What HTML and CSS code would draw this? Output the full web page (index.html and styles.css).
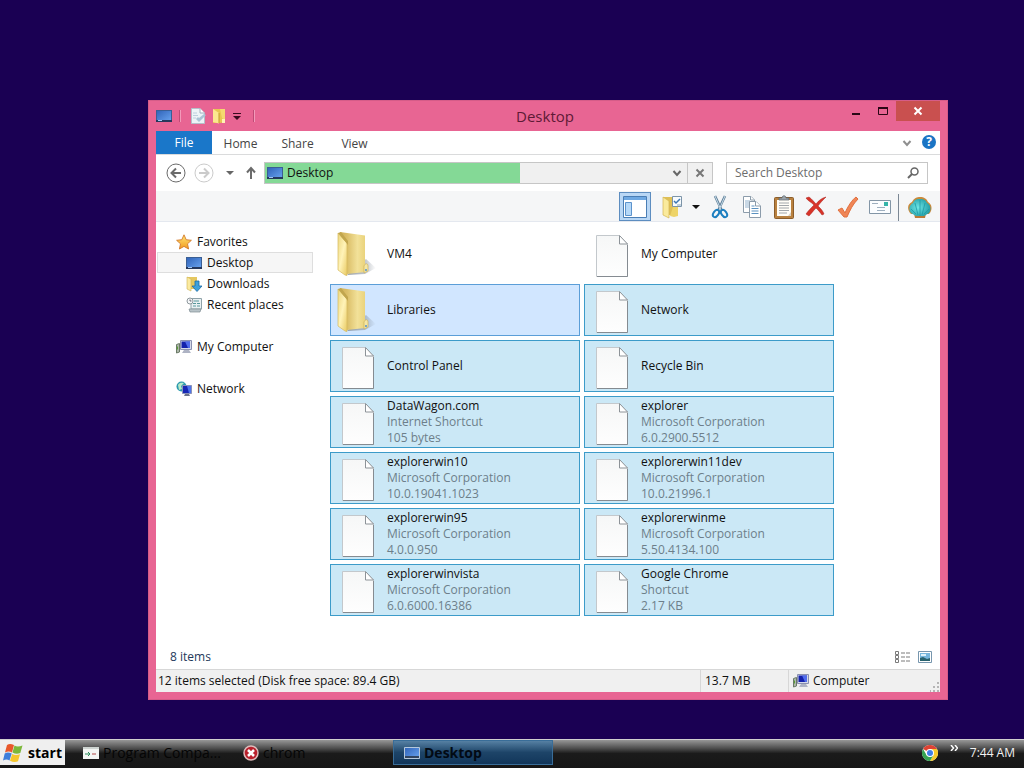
FILE: index.html
```
<!DOCTYPE html>
<html lang="en">
<head>
    <meta charset="UTF-8">
    <meta name="viewport" content="width=device-width, initial-scale=1.0">
    <title>Desktop</title>
    <link rel="stylesheet" href="styles.css">
</head>
<body>
    <!-- shared icons -->
    <svg class="sprite" aria-hidden="true">
        <defs>
            <linearGradient id="g-screen" x1="0" y1="0" x2="1" y2="1">
                <stop offset="0" stop-color="#2f62b8"/>
                <stop offset="1" stop-color="#6aa5f0"/>
            </linearGradient>
            <linearGradient id="g-paper" x1="0" y1="0" x2="0" y2="1">
                <stop offset="0" stop-color="#f6f7f7"/>
                <stop offset="1" stop-color="#fefefe"/>
            </linearGradient>
            <linearGradient id="g-front" x1="0" y1="0" x2="1" y2="1">
                <stop offset="0" stop-color="#ecd67e"/>
                <stop offset="0.5" stop-color="#fff3b8"/>
                <stop offset="1" stop-color="#e9ca62"/>
            </linearGradient>
            <linearGradient id="g-back" x1="0" y1="0" x2="1" y2="0">
                <stop offset="0" stop-color="#cfae55"/>
                <stop offset="0.3" stop-color="#dcc06a"/>
                <stop offset="0.7" stop-color="#f2e199"/>
                <stop offset="1" stop-color="#ead37c"/>
            </linearGradient>
            <linearGradient id="g-shadow" x1="0" y1="0" x2="1" y2="0">
                <stop offset="0" stop-color="#7f8893" stop-opacity="0.8"/>
                <stop offset="0.6" stop-color="#7f8893" stop-opacity="0.5"/>
                <stop offset="1" stop-color="#7f8893" stop-opacity="0"/>
            </linearGradient>
            <linearGradient id="g-star" x1="0" y1="0" x2="0" y2="1">
                <stop offset="0" stop-color="#ffe878"/>
                <stop offset="1" stop-color="#f29a1d"/>
            </linearGradient>
            <radialGradient id="g-shell" cx="0.4" cy="0.5" r="0.7">
                <stop offset="0" stop-color="#6fe6e6"/>
                <stop offset="1" stop-color="#16929c"/>
            </radialGradient>
        </defs>
        <symbol id="i-desktop" viewBox="0 0 16 16">
            <rect x="0.5" y="2.5" width="15" height="11" fill="url(#g-screen)" stroke="#3a5f94"/>
            <path d="M0 12h16v2H0z" fill="#26385c"/>
            <path d="M2 12.5h4" stroke="#9cc6f4"/>
        </symbol>
        <symbol id="i-file" viewBox="0 0 34 44">
            <path d="M2.500 42.500V1.500H24l7.500 8V42.500z" transform="translate(.5 .5)" fill="#50606c" opacity=".45"/>
            <path d="M1.500 42.500V1.500H24L32.500 10V42.500z" fill="url(#g-paper)" stroke="#c3c8cc"/>
            <path d="M24.500 1.500V10H32.500z" fill="#fff" stroke="#8d9398"/>
            <path d="M32.500 11V42.500H2" fill="none" stroke="#858b91"/>
        </symbol>
        <symbol id="i-folder" viewBox="0 0 40 46">
            <path d="M30 28L40 37 29 43 11 44z" fill="url(#g-shadow)"/>
            <path d="M4 1L29 4.500V41L11 43z" fill="url(#g-back)"/>
            <path d="M28 35c1-3 4-3 4 0v5l-4 2z" fill="#f5e6a4" stroke="#cdb25a" stroke-width=".7"/>
            <path d="M29 38h2v2h-2z" fill="#7aa6c0"/>
            <path d="M2 2L11 12V44.500L9 44 2 39z" fill="url(#g-front)" stroke="#d6b95c" stroke-width=".7"/>
            <path d="M2 2L5 1l7 9v4z" fill="#c1a64e"/>
        </symbol>
        <symbol id="i-computer" viewBox="0 0 16 16">
            <path d="M0.500 5.500l3-1V13l-3 1z" fill="#aeb8ab" stroke="#6a7a66"/>
            <path d="M1.500 7.500v3" stroke="#5ba036"/>
            <path d="M4.500 1.500H15.500V10.500H4.500z" fill="#d5d9e8" stroke="#8a90b0"/>
            <path d="M5.500 2.500H14V9H5.500z" fill="#1522ac"/>
            <path d="M9 2.500h5V9h-2z" fill="#506cec"/>
            <path d="M8 11h5l2 3H6z" fill="#aeb3c4"/>
        </symbol>
        <symbol id="i-caret" viewBox="0 0 8 4"><path d="M0 0h8L4 4z" fill="currentColor"/></symbol>
        <symbol id="i-chevron" viewBox="0 0 10 8"><path d="M1.500 2L5 6l3.500-4" fill="none" stroke="currentColor" stroke-width="2"/></symbol>
    </svg>

    <main class="desktop">
        <section class="window">
            <header class="titlebar">
                <div class="quick-access">
                    <svg class="icon"><use href="#i-desktop"/></svg>
                    <span class="divider"></span>
                    <button type="button" aria-label="Properties">
                        <svg class="icon" viewBox="0 0 16 16"><path d="M1.500.500H10L14.500 5V15.500H1.500z" fill="#edf3f7" stroke="#b5c0ca"/><path d="M10 .5V5h4.500" fill="#fff" stroke="#9eb0bf"/><path d="M3 5h4M3 7.500h5M3 10h3" stroke="#bdcfdd"/><path d="M6 11l3 3 7-7-2-1-5 4-1-1z" fill="#aac4d6"/></svg>
                    </button>
                    <button type="button" aria-label="New folder">
                        <svg class="icon" viewBox="0 0 16 16"><path d="M2 1h12v13l-5 1H2z" fill="#e9c653"/><path d="M2 1l6 4v10.500L2 14z" fill="#fce88f"/><path d="M9 1l2 9 3 2V1z" fill="#f5d970"/><path d="M8 5v10" stroke="#c29b2f"/><path d="M11 11h3v4h-3z" fill="#fff3b5"/></svg>
                    </button>
                    <button type="button" aria-label="Customize toolbar">
                        <svg class="icon" viewBox="0 0 16 16"><path d="M1 5.500h8" stroke="#3a0a1e"/><path d="M1 8h8L5 12z" fill="#3a0a1e"/></svg>
                    </button>
                    <span class="divider"></span>
                </div>
                <h1>Desktop</h1>
                <div class="caption-buttons">
                    <button type="button" aria-label="Minimize"><svg width="12" height="10" viewBox="0 0 12 10"><path d="M2 8h8" stroke="#2a0716" stroke-width="2"/></svg></button>
                    <button type="button" aria-label="Maximize"><svg width="12" height="10" viewBox="0 0 12 10"><path d="M1.500 1.500h9v7h-9z" fill="none" stroke="#2a0716"/><path d="M1 2h10" stroke="#2a0716" stroke-width="2"/></svg></button>
                    <button type="button" class="close" aria-label="Close"><svg width="10" height="10" viewBox="0 0 10 10"><path d="M1.500 1.500l7 7M8.500 1.500l-7 7" stroke="#fff" stroke-width="2"/></svg></button>
                </div>
            </header>

            <div class="client">
                <nav class="ribbon">
                    <button type="button" class="tab file">File</button>
                    <button type="button" class="tab">Home</button>
                    <button type="button" class="tab">Share</button>
                    <button type="button" class="tab">View</button>
                    <span class="spacer"></span>
                    <button type="button" class="expand" aria-label="Expand ribbon"><svg width="10" height="8"><use href="#i-chevron"/></svg></button>
                    <button type="button" class="help" aria-label="Help">?</button>
                </nav>

                <div class="navbar">
                    <button type="button" aria-label="Back"><svg width="20" height="20" viewBox="0 0 20 20" fill="none" stroke="#6b6b6b"><circle cx="10" cy="10" r="9"/><path d="M15 10H6M10 5.500L5.500 10l4.500 4.500" stroke-width="2"/></svg></button>
                    <button type="button" aria-label="Forward" disabled><svg width="20" height="20" viewBox="0 0 20 20" fill="none" stroke="#cbcbcb"><circle cx="10" cy="10" r="9"/><path d="M5 10h9M10 5.500l4.500 4.500-4.500 4.500" stroke-width="2"/></svg></button>
                    <button type="button" class="recent" aria-label="Recent locations"><svg width="8" height="4"><use href="#i-caret"/></svg></button>
                    <button type="button" class="up" aria-label="Up"><svg width="12" height="14" viewBox="0 0 12 14" fill="none" stroke="#6b6b6b" stroke-width="2"><path d="M6 13V2M2 6.500L6 2l4 4.500"/></svg></button>
                    <div class="address">
                        <svg class="icon"><use href="#i-desktop"/></svg>
                        <input type="text" value="Desktop" aria-label="Address">
                        <button type="button" aria-label="Previous locations"><svg width="10" height="8"><use href="#i-chevron"/></svg></button>
                        <button type="button" class="stop" aria-label="Stop"><svg width="10" height="10" viewBox="0 0 10 10"><path d="M1.500 1.500l7 7M8.500 1.500l-7 7" stroke="#777" stroke-width="2"/></svg></button>
                    </div>
                    <div class="search">
                        <input type="text" placeholder="Search Desktop" aria-label="Search Desktop">
                        <svg width="12" height="12" viewBox="0 0 12 12" fill="none" stroke="#666"><circle cx="7.500" cy="4.500" r="3.500" stroke-width="1.500"/><path d="M5 7L1 11" stroke-width="2"/></svg>
                    </div>
                </div>

                <div class="toolbar">
                    <button type="button" class="active" aria-label="Navigation pane">
                        <svg width="26" height="24" viewBox="0 0 26 24"><path d="M1.500 1.500h23v21h-23z" fill="#fff" stroke="#4a7eb5"/><path d="M2 2h22v3H2z" fill="#6ea8e2"/><path d="M3.500 7.500h6v13h-6z" fill="#b5d8f8" stroke="#5c93cc"/></svg>
                    </button>
                    <button type="button" aria-label="Folder options">
                        <svg width="24" height="24" viewBox="0 0 24 24"><path d="M3 2h12v18H8z" fill="#dfc057"/><path d="M3 2l6 4v17l-6-3z" fill="#faea9c" stroke="#d4b653" stroke-width=".7"/><path d="M13 12h5v9l-4 1-4-1z" fill="#eed468"/><path d="M12.500 1.500h9v10h-9z" fill="#f7fbfe" stroke="#7c94a8"/><path d="M14 6l2 2 4-4" fill="none" stroke="#3d77b4" stroke-width="1.500"/><path d="M17 10h4" stroke="#8ba6bc"/></svg>
                    </button>
                    <button type="button" class="narrow" aria-label="More options"><svg width="8" height="4"><use href="#i-caret"/></svg></button>
                    <button type="button" aria-label="Cut">
                        <svg width="24" height="24" viewBox="0 0 24 24" fill="none"><path d="M7 1l7 15M17 1l-7 15" stroke="#5f7f98" stroke-width="2.500"/><path d="M7 1l6 14M17 1l-6 14" stroke="#c6dbe8"/><ellipse cx="8" cy="18.500" rx="2.500" ry="4" transform="rotate(35 8 18.500)" stroke="#1c7fc0" stroke-width="2"/><ellipse cx="16" cy="18.500" rx="2.500" ry="4" transform="rotate(-35 16 18.500)" stroke="#1c7fc0" stroke-width="2"/></svg>
                    </button>
                    <button type="button" aria-label="Copy">
                        <svg width="24" height="24" viewBox="0 0 24 24" fill="#fff" stroke="#8c9cab"><path d="M3.500 1.500H11L14.500 5V17.500h-11z"/><path d="M10.500 1.500V5h4"/><path d="M5 6h5M5 8h5M5 10h4M5 12h4" stroke="#93b2cd"/><path d="M9.500 6.500H16L20.500 11V22.500h-11z"/><path d="M15.500 6.500V11h5"/><path d="M11.500 11h3M11.500 13.500h7M11.500 16h7M11.500 18.500h7" stroke="#5a91c0"/></svg>
                    </button>
                    <button type="button" aria-label="Paste">
                        <svg width="24" height="24" viewBox="0 0 24 24"><rect x="2.500" y="2.500" width="19" height="21" rx="1" fill="#b9813f" stroke="#8b5d2b"/><path d="M5 5h14v16H5z" fill="#fffdf7"/><path d="M7 8h10M7 10.500h10M7 13h10M7 15.500h10M7 18h8" stroke="#a2a7ab"/><path d="M16 21l3-4v4z" fill="#d9d3c5"/><path d="M7 5V3h3c0-3 4-3 4 0h3v2z" fill="#9aa3aa" stroke="#59636c" stroke-width=".7"/></svg>
                    </button>
                    <button type="button" aria-label="Delete">
                        <svg width="24" height="24" viewBox="0 0 24 24"><path d="M2 3l3-1c3 2 5 5 7 7 3-4 6-6 10-7-3 3-6 6-8 9 3 3 5 5 6 8l-2 1c-2-3-4-5-6-7-3 3-5 6-7 8l-3-2c2-3 5-6 8-9C7 7 4 6 2 3z" fill="#d83328" stroke="#a81e1a" stroke-width=".5"/></svg>
                    </button>
                    <button type="button" aria-label="Properties">
                        <svg width="24" height="24" viewBox="0 0 24 24"><path d="M2 15l4-2 3 5C12 11 16 5 20 2l2 2C17 9 14 15 11 22H8z" fill="#f08556" stroke="#e0703f"/></svg>
                    </button>
                    <button type="button" aria-label="E-mail">
                        <svg width="24" height="24" viewBox="0 0 24 24"><path d="M1.500 5.500h21v13h-21z" fill="#fbfdff" stroke="#8295a6"/><path d="M16 7h4v4h-4z" fill="#36b5aa"/><path d="M4 8.500h6M9 12.500h8M9 15.500h8" stroke="#9eafbf"/></svg>
                    </button>
                    <button type="button" class="shell" aria-label="Classic settings">
                        <svg width="26" height="24" viewBox="0 0 26 24"><path d="M7 18H4C0 14 0 8 5 6c2-4 5-5 8-5 4 0 7 2 8 5 4 2 5 8 1 12h-3l-1 4H8z" fill="#c98a3c"/><path d="M9 20l-5-3C1 13 3 8 6 7c1-4 5-4 7-4 4 0 6 1 7 4 3 1 5 6 2 10l-5 3z" fill="url(#g-shell)"/><path d="M13 20V4M11 19L8 7M15 19l3-12M9 18l-5-5M17 18l5-5" stroke="#1d9aa6" stroke-width=".8"/><path d="M8 20h10v2H8z" fill="#b97a37"/></svg>
                    </button>
                </div>

                <div class="content">
                    <nav class="tree">
                        <a href="#favorites">
                            <svg class="icon" viewBox="0 0 16 16"><path d="M8 .8l2.200 4.900 5.200.6-3.900 3.500 1.100 5.200L8 12.400l-4.600 2.600 1.100-5.200L.6 6.300l5.200-.6z" fill="url(#g-star)" stroke="#d2792b" stroke-width=".9"/></svg>
                            Favorites
                        </a>
                        <a href="#desktop" class="child selected"><svg class="icon"><use href="#i-desktop"/></svg>Desktop</a>
                        <a href="#downloads" class="child">
                            <svg class="icon" viewBox="0 0 16 16"><path d="M1 1h10v12H4z" fill="#e5c760"/><path d="M1 1l4 2v12l-4-2z" fill="#fbeaa0" stroke="#cfb152" stroke-width=".6"/><path d="M9 5h4v5h3l-5 5.500L6 10h3z" fill="#3da0dc" stroke="#1b6aa5" stroke-width=".8"/></svg>
                            Downloads
                        </a>
                        <a href="#recent" class="child">
                            <svg class="icon" viewBox="0 0 16 16"><path d="M5 1.500h10.500V12H5z" fill="#e9f0f2" stroke="#8fa2a9"/><circle cx="4" cy="4" r="3" fill="#f6f8f9" stroke="#8e989d"/><path d="M4 2.500V4h1.500" fill="none" stroke="#667"/><path d="M8 4h5M7 6.500h3M11 6.500h3M7 9h3M11 9h3" stroke="#58989c"/><path d="M3 12h12l-1 3H4z" fill="#b8c3c8" stroke="#7e8c93" stroke-width=".7"/></svg>
                            Recent places
                        </a>
                        <a href="#computer" class="group"><svg class="icon"><use href="#i-computer"/></svg>My Computer</a>
                        <a href="#network" class="group">
                            <svg class="icon" viewBox="0 0 16 16"><circle cx="5.500" cy="5.500" r="5" fill="#2b9aae"/><path d="M2 4c2-3 4-2 6-2L5 5l1 3-3 1z" fill="#b8e9c8"/><path d="M6.500 4.500h9v8h-9z" fill="#1727b5" stroke="#8a92b8"/><path d="M11 5h4v7h-2z" fill="#4e74ec"/><path d="M9 13h4l1 2H8z" fill="#6b728a"/></svg>
                            Network
                        </a>
                    </nav>

                    <ul class="files">
                        <li><a href="#vm4"><svg class="folder"><use href="#i-folder"/></svg><span>VM4</span></a></li>
                        <li><a href="#my-computer"><svg class="file-icon"><use href="#i-file"/></svg><span>My Computer</span></a></li>
                        <li class="selected hot"><a href="#libraries"><svg class="folder"><use href="#i-folder"/></svg><span>Libraries</span></a></li>
                        <li class="selected"><a href="#network-item"><svg class="file-icon"><use href="#i-file"/></svg><span>Network</span></a></li>
                        <li class="selected"><a href="#control-panel"><svg class="file-icon"><use href="#i-file"/></svg><span>Control Panel</span></a></li>
                        <li class="selected"><a href="#recycle-bin"><svg class="file-icon"><use href="#i-file"/></svg><span>Recycle Bin</span></a></li>
                        <li class="selected"><a href="#datawagon"><svg class="file-icon"><use href="#i-file"/></svg><span>DataWagon.com<small>Internet Shortcut</small><small>105 bytes</small></span></a></li>
                        <li class="selected"><a href="#explorer"><svg class="file-icon"><use href="#i-file"/></svg><span>explorer<small>Microsoft Corporation</small><small>6.0.2900.5512</small></span></a></li>
                        <li class="selected"><a href="#explorerwin10"><svg class="file-icon"><use href="#i-file"/></svg><span>explorerwin10<small>Microsoft Corporation</small><small>10.0.19041.1023</small></span></a></li>
                        <li class="selected"><a href="#explorerwin11dev"><svg class="file-icon"><use href="#i-file"/></svg><span>explorerwin11dev<small>Microsoft Corporation</small><small>10.0.21996.1</small></span></a></li>
                        <li class="selected"><a href="#explorerwin95"><svg class="file-icon"><use href="#i-file"/></svg><span>explorerwin95<small>Microsoft Corporation</small><small>4.0.0.950</small></span></a></li>
                        <li class="selected"><a href="#explorerwinme"><svg class="file-icon"><use href="#i-file"/></svg><span>explorerwinme<small>Microsoft Corporation</small><small>5.50.4134.100</small></span></a></li>
                        <li class="selected"><a href="#explorerwinvista"><svg class="file-icon"><use href="#i-file"/></svg><span>explorerwinvista<small>Microsoft Corporation</small><small>6.0.6000.16386</small></span></a></li>
                        <li class="selected"><a href="#chrome"><svg class="file-icon"><use href="#i-file"/></svg><span>Google Chrome<small>Shortcut</small><small>2.17 KB</small></span></a></li>
                    </ul>
                </div>

                <div class="summary">
                    <span>8 items</span>
                    <span class="spacer"></span>
                    <button type="button" aria-label="Details view"><svg width="16" height="14" viewBox="0 0 16 14" fill="none" stroke="#7a7a7a"><path d="M1.500 1.500h3v3h-3zM1.500 5.500h3v3h-3zM1.500 9.500h3v3h-3z"/><path d="M7 3h4M12 3h4M7 7h4M12 7h4M7 11h4M12 11h4"/></svg></button>
                    <button type="button" aria-label="Thumbnail view"><svg width="14" height="12" viewBox="0 0 14 12"><path d="M.5.500h13v11H.5z" fill="#fff" stroke="#7796ae"/><path d="M2 2h10v8H2z" fill="#76b6dc"/><path d="M2 10V7l3-1 4 2 3-1v3z" fill="#28626d"/><path d="M3 3h5v2H3z" fill="#def1fa"/></svg></button>
                </div>

                <footer class="statusbar">
                    <span class="spacer">12 items selected (Disk free space: 89.4 GB)</span>
                    <span class="size">13.7 MB</span>
                    <span class="zone"><svg class="icon"><use href="#i-computer"/></svg>Computer</span>
                    <svg class="grip" width="10" height="10" viewBox="0 0 10 10" fill="#b5b5b5"><path d="M7 0h2v2H7zM7 4h2v2H7zM3 4h2v2H3zM7 8h2v2H7zM3 8h2v2H3zM0 8h1v2H0z"/></svg>
                </footer>
            </div>
        </section>
    </main>

    <div class="taskbar">
        <button type="button" class="start">
            <svg width="20" height="20" viewBox="0 0 20 20"><path d="M4 2c2-1.500 4-1.500 7 0L9 9.500c-2-1.500-4.500-1.500-7 0z" fill="#e8582b"/><path d="M11.500 2.500c2 1.300 4.500 1.300 8 0L17.300 10c-2.500 1-5 1-7.800-.5z" fill="#7cb83a"/><path d="M1.700 10.500c2-1.300 4.500-1.300 7 0L6.500 17.500c-2-1.300-4-1.300-6.500 0z" fill="#3e7edb"/><path d="M9.200 11c2.300 1.300 4.800 1.300 7.800.2l-2 7c-2.300 1-5 1-8-.5z" fill="#f5c62c"/></svg>
            start
        </button>
        <div class="tasks">
            <button type="button">
                <svg class="icon" viewBox="0 0 16 16"><path d="M0 2h16v12H0z" fill="#f2f4f2"/><path d="M0 2h16v2H0z" fill="#cdd3d0"/><path d="M2 9h5M5 7l2 2-2 2" fill="none" stroke="#2d8a5c"/><path d="M9 9h4" stroke="#b04646"/></svg>
                <span>Program Compa...</span>
            </button>
            <button type="button">
                <svg class="icon" viewBox="0 0 16 16"><circle cx="8" cy="8" r="7" fill="#b8202c" stroke="#dfbcbc" stroke-width="1.500"/><path d="M5 5l6 6M11 5l-6 6" stroke="#fff" stroke-width="2.500"/></svg>
                <span>chrom</span>
            </button>
            <button type="button" class="current">
                <svg class="icon" viewBox="0 0 16 16"><path d="M.5 2.500h15v11H.5z" fill="url(#g-screen)" stroke="#b4c8dc"/><path d="M1 12h14" stroke="#31445e" stroke-width="2"/></svg>
                <span>Desktop</span>
            </button>
        </div>
        <div class="tray">
            <svg class="icon" viewBox="0 0 16 16"><circle cx="8" cy="8" r="8" fill="#fff"/><path d="M8 8L1.070 4A8 8 0 0 1 14.930 4z" fill="#de4334"/><path d="M8 8V4h6.930A8 8 0 0 1 8 16l3.500-6z" fill="#f6c92b"/><path d="M8 16A8 8 0 0 1 1.070 4L4.500 10 8 12l3.500-2z" fill="#35a352"/><circle cx="8" cy="8" r="4" fill="#fff"/><circle cx="8" cy="8" r="3" fill="#3f7fe8"/></svg>
            <button type="button" aria-label="Show hidden icons"><svg width="8" height="6" viewBox="0 0 8 6" fill="none" stroke="#fff" stroke-width="1.500"><path d="M1 0l2.500 3L1 6M5 0l2.500 3L5 6"/></svg></button>
            <time>7:44 AM</time>
        </div>
    </div>
</body>
</html>
```

FILE: styles.css
```
* {
    box-sizing: border-box;
}

body {
    margin: 0;
    min-height: 100vh;
    display: flex;
    flex-direction: column;
    background-color: #1a0053;
    color: #111;
    font-family: "Open Sans", "Noto Sans", sans-serif;
    font-size: 12px;
    line-height: 16px;
}

button,
input {
    font: inherit;
    color: inherit;
    border: none;
    background: none;
    padding: 0;
    margin: 0;
    outline: none;
}

button {
    display: flex;
    align-items: center;
    justify-content: center;
}

a {
    color: inherit;
    text-decoration: none;
}

svg {
    display: block;
    flex: none;
}

.sprite {
    width: 0;
    height: 0;
}

.icon {
    width: 16px;
    height: 16px;
}

.spacer {
    flex: 1;
}

.desktop {
    flex: 1;
    display: flex;
    padding: 100px 76px 39px 148px;
}

/* window frame */
.window {
    flex: 1;
    min-width: 0;
    display: flex;
    flex-direction: column;
    padding: 0 7px 7px;
    background-color: #e86593;
    border: 1px solid #d55c88;
}

.titlebar {
    display: flex;
    height: 30px;
}

.titlebar h1 {
    flex: 1;
    margin: 0;
    font-size: 15px;
    font-weight: normal;
    line-height: 30px;
    text-align: center;
    color: #5e1a36;
}

.quick-access {
    display: flex;
    align-items: center;
    gap: 5px;
    width: 92px;
}

.quick-access .divider {
    width: 2px;
    height: 12px;
    margin: 0 4px 0 2px;
    border-left: 1px solid #c04a76;
    border-right: 1px solid #f39aba;
}

.quick-access .divider:last-child {
    margin: 0;
}

.caption-buttons {
    display: flex;
    height: 20px;
}

.caption-buttons button {
    width: 27px;
}

.caption-buttons .close {
    width: 44px;
    background-color: #c9504f;
}

.client {
    flex: 1;
    display: flex;
    flex-direction: column;
    background-color: #fff;
}

.ribbon {
    display: flex;
    height: 24px;
    border-bottom: 1px solid #dadbdc;
    color: #444;
}

.tab {
    width: 57px;
    padding-top: 2px;
}

.tab.file {
    width: 56px;
    padding-top: 0;
    background-color: #1a77c9;
    color: #fff;
}

.ribbon .expand {
    width: 22px;
    color: #8f8f8f;
}

.ribbon .help {
    width: 14px;
    height: 14px;
    margin: 4px 4px 0;
    border-radius: 50%;
    background-color: #1a74c4;
    color: #fff;
    font-weight: bold;
}

.navbar {
    display: flex;
    align-items: center;
    height: 36px;
    padding: 0 12px 0 10px;
    color: #666;
}

.navbar > button {
    width: 20px;
    margin-right: 8px;
}

.navbar .recent,
.navbar .up {
    width: 16px;
    margin-right: 5px;
}

.address {
    flex: 1;
    display: flex;
    align-items: center;
    height: 22px;
    padding-left: 2px;
    border: 1px solid #c6c6c6;
    background: linear-gradient(90deg, #84d996 57%, #f0f0f0 57%);
}

.address input {
    flex: 1;
    min-width: 0;
    margin-left: 4px;
    color: #111;
}

.address button {
    width: 20px;
    height: 20px;
}

.address .stop {
    width: 25px;
    border-left: 1px solid #c6c6c6;
}

.search {
    display: flex;
    align-items: center;
    width: 202px;
    height: 22px;
    margin-left: 13px;
    padding: 0 8px;
    border: 1px solid #c6c6c6;
}

.search input {
    flex: 1;
    min-width: 0;
}

.search input::placeholder {
    color: #6d6d6d;
    opacity: 1;
}

.toolbar {
    display: flex;
    justify-content: flex-end;
    align-items: flex-end;
    height: 31px;
    padding-right: 4px;
    background-color: #f5f6f7;
    border-bottom: 1px solid #e4e8ef;
}

.toolbar button {
    width: 32px;
    height: 29px;
}

.toolbar .active {
    margin-right: 5px;
    background-color: #b9d7f5;
    border: 1px solid #5d8dc0;
}

.toolbar .narrow {
    width: 16px;
}

.toolbar .shell {
    width: 38px;
    height: 27px;
    margin-left: 2px;
    border-left: 1px solid #7b8794;
    padding-left: 4px;
}

/* folder tree and file tiles */
.content {
    flex: 1;
    display: flex;
}

.tree {
    width: 157px;
    padding: 9px 0 0 1px;
}

.tree a {
    display: flex;
    align-items: center;
    gap: 5px;
    height: 21px;
    padding-left: 19px;
}

.tree .child {
    padding-left: 29px;
}

.tree .selected {
    padding-left: 28px;
    background-color: #f6f6f6;
    border: 1px solid #dedede;
}

.tree .group {
    margin-top: 21px;
}

.files {
    flex: 1;
    display: grid;
    grid-template-columns: repeat(auto-fill, 250px);
    grid-auto-rows: 52px;
    gap: 4px;
    align-content: start;
    list-style: none;
    margin: 0;
    padding: 6px 0 0 17px;
}

.files li {
    border: 1px solid transparent;
}

.files .selected {
    background-color: #cbe8f6;
    border-color: #3c9bc9;
}

.files .hot {
    background-color: #d1e6ff;
    border-color: #5b9ed8;
}

.files a {
    display: flex;
    align-items: center;
    height: 50px;
}

.files svg {
    width: 34px;
    height: 44px;
    margin: 4px 12px 0 10px;
}

.files .folder {
    width: 40px;
    height: 46px;
    margin: 0 11px 0 5px;
}

.files small {
    display: block;
    font-size: 12px;
    color: #6d7f8a;
}

.summary {
    display: flex;
    align-items: center;
    gap: 8px;
    height: 24px;
    padding: 0 8px 0 14px;
    color: #1e395b;
}

.statusbar {
    display: flex;
    align-items: center;
    height: 23px;
    padding-left: 2px;
    background-color: #f0f0f0;
    border-top: 1px solid #d7d7d7;
}

.statusbar .size,
.statusbar .zone {
    display: flex;
    align-items: center;
    gap: 4px;
    height: 22px;
    width: 88px;
    padding-left: 4px;
    border-left: 1px solid #d7d7d7;
}

.statusbar .zone {
    width: 142px;
}

.statusbar .grip {
    align-self: flex-end;
}

/* taskbar */
.taskbar {
    display: flex;
    height: 29px;
    border-top: 1px solid #cfcfcf;
    background: linear-gradient(#979797, #4d4d4d 30%, #1b1b1b 48%, #161616);
}

.start {
    width: 65px;
    height: 25px;
    gap: 5px;
    background-color: #efefef;
    color: #000;
    font-size: 14px;
    font-weight: bold;
}

.tasks {
    flex: 1;
    display: flex;
    padding-left: 8px;
}

.tasks button {
    justify-content: flex-start;
    gap: 4px;
    width: 160px;
    height: 25px;
    padding-left: 10px;
    color: #050505;
    font-size: 14px;
}

.tasks .current {
    background: linear-gradient(#5680a3, #1d4468 50%, #12365a);
    border: 1px solid #396d98;
    color: #020a14;
    font-weight: bold;
}

.tray {
    display: flex;
    align-items: center;
    gap: 12px;
    height: 26px;
    padding-right: 9px;
    color: #f2f2f2;
}

.tray button {
    align-self: flex-start;
    margin-top: 5px;
}
```
